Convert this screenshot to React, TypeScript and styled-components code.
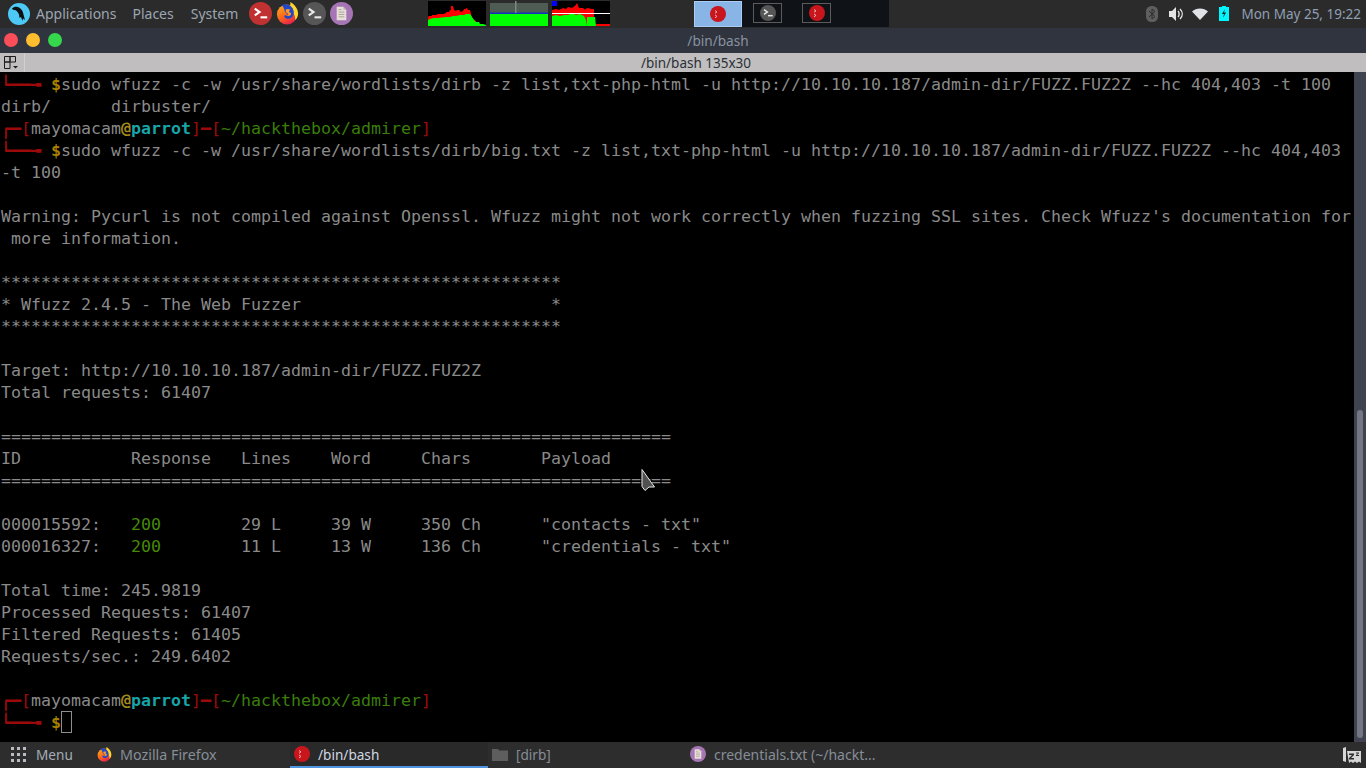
import React from "react";
import styled, { createGlobalStyle } from "styled-components";

const GlobalStyle = createGlobalStyle`
    html, body {
        margin: 0;
        padding: 0;
        background: #000000;
    }
    #root {
        width: 1366px;
        height: 768px;
        overflow: hidden;
    }
`;

const Screen = styled.div`
    position: relative;
    width: 1366px;
    height: 768px;
    display: flex;
    flex-direction: column;
    background: #000000;
    font-family: "Noto Sans", sans-serif;
`;

const TopPanel = styled.header`
    height: 28px;
    flex: none;
    display: flex;
    align-items: flex-start;
    background: #2b2b2b;
`;

const MenuGroup = styled.nav`
    display: flex;
    align-items: center;
    height: 27px;
    padding-left: 8px;
`;

const MenuItem = styled.span<{ $gap: number }>`
    margin-left: ${(p) => p.$gap}px;
    font-size: 14px;
    color: #9ba6b2;
`;

const Launchers = styled.div`
    display: flex;
    align-items: center;
    gap: 4px;
    height: 27px;
    margin-left: 11px;
`;

const Monitors = styled.div`
    display: flex;
    gap: 4px;
    margin: 1px 0 0 75px;
`;

const Workspaces = styled.div`
    display: flex;
    height: 27px;
    margin-left: 84px;
    background: #0f1217;
`;

const WorkspaceCell = styled.div<{ $active?: boolean; $width: number }>`
    width: ${(p) => p.$width}px;
    height: 26px;
    display: flex;
    align-items: center;
    justify-content: ${(p) => (p.$active ? "center" : "flex-start")};
    box-sizing: border-box;
    padding-left: ${(p) => (p.$active ? 0 : 11)}px;
    margin-top: ${(p) => (p.$active ? 1 : 0)}px;
    background: ${(p) => (p.$active ? "#89b4e6" : "transparent")};
    border: ${(p) => (p.$active ? "1px solid #a9cdf5" : "none")};
`;

const MiniWindow = styled.div`
    width: 29px;
    height: 20px;
    display: flex;
    align-items: center;
    justify-content: center;
    border: 1px solid #5b5b5b;
    box-sizing: border-box;
`;

const Tray = styled.div`
    margin-left: auto;
    height: 27px;
    display: flex;
    align-items: center;
    padding-right: 5px;
`;

const TrayIcon = styled.span<{ $left: number }>`
    display: flex;
    margin-left: ${(p) => p.$left}px;
`;

const Clock = styled.span`
    margin-left: 12px;
    font-size: 13.5px;
    color: #8f9fb3;
`;

const TitleBar = styled.div`
    height: 25px;
    flex: none;
    display: flex;
    align-items: center;
    justify-content: center;
    position: relative;
    padding-left: 70px;
    background: #2f343f;
    font-size: 13.6px;
    color: #8a929f;
`;

const Lights = styled.div`
    position: absolute;
    left: 4px;
    top: 5px;
    display: flex;
    gap: 8px;
`;

const Light = styled.span<{ $color: string }>`
    width: 14px;
    height: 14px;
    border-radius: 50%;
    background: ${(p) => p.$color};
`;

const TabBar = styled.div`
    height: 19px;
    flex: none;
    display: flex;
    align-items: center;
    background: #c0bebe;
    font-size: 13.5px;
    color: #2a3038;
`;

const TabTool = styled.div`
    width: 25px;
    height: 19px;
    flex: none;
    display: flex;
    align-items: center;
    justify-content: center;
    border-right: 1px solid #d2d0d0;
    box-sizing: border-box;
`;

const TabTitle = styled.span`
    flex: 1;
    text-align: center;
    padding-left: 1px;
`;

const TerminalArea = styled.main`
    flex: 1;
    display: flex;
    min-height: 0;
`;

const Terminal = styled.div`
    flex: 1;
    padding: 1px 0 0 1px;
    overflow: hidden;
    font-family: "DejaVu Sans Mono", monospace;
    font-size: 16.61px;
    color: #8a8a8a;
`;

const Line = styled.div`
    height: 22px;
    line-height: 24px;
    white-space: pre;
`;

const Frame = styled.span`
    color: #9c0a0a;
`;

const FrameHeavy = styled(Frame)`
    font-weight: 700;
    text-shadow: 0 1px 0 #9c0a0a;
`;

const Dollar = styled.span`
    color: #a98000;
    font-weight: 700;
`;

const At = styled.span`
    color: #a58a1c;
    font-weight: 700;
`;

const Host = styled.span`
    color: #18a5a8;
    font-weight: 700;
`;

const PathText = styled.span`
    color: #3a7d0a;
`;

const Ok = styled.span`
    color: #468a08;
`;

const Caret = styled.span`
    display: inline-block;
    width: 11px;
    height: 22px;
    box-sizing: border-box;
    border: 1px solid #8e8e8e;
    vertical-align: top;
`;

const ScrollTrack = styled.div`
    width: 12px;
    flex: none;
    display: flex;
    justify-content: center;
    align-items: flex-end;
    background: #3f4350;
`;

const ScrollThumb = styled.div`
    width: 6px;
    height: 328px;
    margin-bottom: 4px;
    border-radius: 3px;
    background: #747783;
`;

const Pointer = styled.svg`
    position: absolute;
    left: 641px;
    top: 468px;
`;

const BottomPanel = styled.footer`
    height: 26px;
    flex: none;
    display: flex;
    align-items: stretch;
    background: #2d2d2d;
    font-size: 13.6px;
`;

const StartButton = styled.div`
    width: 93px;
    display: flex;
    align-items: center;
    gap: 10px;
    padding: 0 0 2px 11px;
    box-sizing: border-box;
    color: #a3adb8;
`;

const Task = styled.div<{ $width: number; $active?: boolean; $font?: number }>`
    width: ${(p) => p.$width}px;
    box-sizing: border-box;
    display: flex;
    align-items: center;
    gap: 8px;
    padding-left: 4px;
    font-size: ${(p) => p.$font ?? 13.6}px;
    color: ${(p) => (p.$active ? "#d0d8e2" : "#868e98")};
    background: ${(p) => (p.$active ? "#292929" : "transparent")};
    border-bottom: 2px solid ${(p) => (p.$active ? "#4f94e0" : "transparent")};
`;

const SleepSlot = styled.div`
    margin-left: auto;
    padding: 5px 5px 0 0;
`;

const RedTerm = ({ size = 18 }: { size?: number }) => (
    <svg width={size} height={size} viewBox="0 0 24 24">
        <circle cx="12" cy="12" r="12" fill="#c03232" />
        <path d="M6 7l5 3.5L6 14" fill="none" stroke="#fff" strokeWidth="2.2" />
        <path d="M12 16h7" stroke="#fff" strokeWidth="2.2" />
    </svg>
);

const RedDot = ({ size = 16 }: { size?: number }) => (
    <svg width={size} height={size} viewBox="0 0 16 16">
        <circle cx="8" cy="8" r="8" fill="#c8161c" />
        <path d="M5 4.500l2 1.400-2 1.400M5 9l2 1.400-2 1.400" fill="none" stroke="#f3c0c0" strokeWidth="0.9" />
    </svg>
);

const GrayTerm = ({ size = 22 }: { size?: number }) => (
    <svg width={size} height={size} viewBox="0 0 24 24">
        <circle cx="12" cy="12" r="12" fill="#565656" />
        <path d="M6 7l5 3.5L6 14" fill="none" stroke="#e8e8e8" strokeWidth="2.2" />
        <path d="M12 16h7" stroke="#e8e8e8" strokeWidth="2.2" />
    </svg>
);

const Firefox = ({ size = 23 }: { size?: number }) => (
    <svg width={size} height={size} viewBox="0 0 24 24">
        <defs>
            <linearGradient id="fx" x1="0.1" y1="0" x2="0.6" y2="1">
                <stop offset="0" stopColor="#ffb020" />
                <stop offset="0.55" stopColor="#ff6a1a" />
                <stop offset="1" stopColor="#e5224c" />
            </linearGradient>
        </defs>
        <circle cx="11.500" cy="13" r="10.500" fill="url(#fx)" />
        <path d="M15 0c4 2.500 8 6.500 8 12 0 3-1 5-3 7 .5-3-.5-6-3-8-1.500-2-2.500-6-2-11z" fill="#ffd52b" />
        <path d="M6 3c3-1 7-1 10 2 2 2 3 5 2.500 8-1 3-4 5-7 4.500-3-1-3.500-3-2-4 1 1 3 1 3.500 0-2-1-3.500-3-4-4 0-2.500-1.500-4.500-3-6.500z" fill="#2247c8" />
        <path d="M10 8c1.500-1 3.500-1 5 0-1 .5-1.500 1.500-1.500 2.500 1.500 0 2.500 1 2 3-1 1-2.500 1.500-4 1 1-.5 1.500-1.500 1-2.500-1.500 0-2.500-2-2.500-4z" fill="#ff9a1f" />
    </svg>
);

const Editor = ({ size = 23 }: { size?: number }) => (
    <svg width={size} height={size} viewBox="0 0 24 24">
        <circle cx="12" cy="12" r="12" fill="#a675b5" />
        <path d="M7 5h7l3 3v11H7z" fill="#e8e0d8" />
        <path d="M14 5v3h3" fill="#bdb5ad" />
        <path d="M9 8h3M9 10.500h6M9 13h6M9 15.500h6" stroke="#a9a29a" strokeWidth="1" />
    </svg>
);

const ParrotLogo = () => (
    <svg width="22" height="22" viewBox="0 0 22 22">
        <circle cx="11" cy="11" r="11" fill="#4cc9f5" />
        <path d="M4 5.500C6 3.500 9 3.500 11 4.500c2.500 1.200 4 4 4.500 7l1.500 5.500-2-1.500-.5 2.500-1.500-4-1.500 1-.5-3.500C10 9 8 7 6.500 7 5.500 7 4.500 6.500 4 5.500z" fill="#0c1014" />
    </svg>
);

const Graph = ({ bg, children }: { bg: string; children: React.ReactNode }) => (
    <svg width="58" height="25" viewBox="0 0 58 25" style={{ background: bg }}>
        {children}
    </svg>
);

const CpuGraph = () => (
    <Graph bg="#000000">
        <path d="M0 25V16l1-1 3 0 0-1 4 0 2-1 6 0 3-2 2 0 1-2 1 0 0-4 2 0 1 4 2 1 1-1 2 0 2 2 2-1 1-2 1 0 2-1 1 2 2 0 1 4 1 3 1 2 3 2 1 3 1-1 2 3 2 0 4 1 0-1z" fill="#ff0000" />
        <path d="M0 25V19l2-1 4-1 4 0 8-1 4 0 3-1 3 0 4-1 4 0 2-1 4 0 2 3 2 3 2 2 3 0 1 2 3 0 6 2z" fill="#00ff00" />
    </Graph>
);

const MemGraph = () => (
    <Graph bg="#4e5c54">
        <rect x="0" y="0" width="58" height="2" fill="#2b2b2b" />
        <rect x="0" y="12.500" width="58" height="12.500" fill="#00ff00" />
        <rect x="0" y="11.500" width="58" height="1.500" fill="#1030c0" />
        <rect x="25" y="0" width="1.500" height="12" fill="#7a8a80" />
    </Graph>
);

const NetGraph = () => (
    <Graph bg="#000000">
        <rect x="0" y="0" width="5" height="5" fill="#0000ff" />
        <path d="M0 25V9l4-1 3 1 4-2 3 1 2-2 4 1 3-2 2-3 2 5 4 0 1 1 1 1V8l3-1 3 1 3 0V15l-1 10z" fill="#ff0000" />
        <path d="M0 25V15l4-1 4 1 4-1 4 0 4-2 4 2 4-1 4 2 2 4 1 6h0V16h8l1 9z" fill="#00ff00" />
        <path d="M44 25v-2h14v2z" fill="#ff0000" />
        <rect x="0" y="12" width="58" height="1" fill="#ffffff" />
    </Graph>
);

const Bluetooth = () => (
    <svg width="12" height="16" viewBox="0 0 12 16">
        <rect width="12" height="16" rx="5.500" fill="#5f5f5f" />
        <path d="M3 5l6 5.500-3 2.500V3l3 2.500L3 11" fill="none" stroke="#2b2b2b" strokeWidth="1" />
    </svg>
);

const Volume = () => (
    <svg width="15" height="14" viewBox="0 0 15 14">
        <path d="M0 4h3l4-4v14l-4-4H0z" fill="#e4e4e4" />
        <path d="M9 4c1.500 1.500 1.500 4.500 0 6M11 2c3 3 3 7 0 10" fill="none" stroke="#e4e4e4" strokeWidth="1.400" />
    </svg>
);

const Wifi = () => (
    <svg width="16" height="12" viewBox="0 0 16 12">
        <path d="M0 3.500C4-.5 12-.5 16 3.500L8 12z" fill="#dfe3e8" />
    </svg>
);

const Battery = () => (
    <svg width="10" height="15" viewBox="0 0 10 15">
        <path d="M3 0h4v1h3v14H0V1h3z" fill="#00f5ff" />
        <path d="M6 3L3 8h2l-1 4 3-5.500H5z" fill="#202020" />
    </svg>
);

const LayoutGlyph = () => (
    <svg width="16" height="14" viewBox="0 0 16 14">
        <path d="M.5.500h5.500v5.500H.5zM6 .500h5.500v5.500H6zM.5 6h5.500v6.500H.5z" fill="none" stroke="#1c1c1c" strokeWidth="1" />
        <path d="M9 10h5l-2.500 2.500z" fill="#1c1c1c" />
    </svg>
);

const MenuDots = () => (
    <svg width="15" height="15" viewBox="0 0 15 15" fill="#b8bcc0">
        {[0, 1, 2].map((r) =>
            [0, 1, 2].map((c) => <rect key={`${r}${c}`} x={c * 6} y={r * 6} width="3" height="3" />)
        )}
    </svg>
);

const Folder = () => (
    <svg width="16" height="13" viewBox="0 0 16 13">
        <path d="M0 1h6l1 1.500h9V13H0z" fill="#5e5e5e" />
    </svg>
);

const Sleep = () => (
    <svg width="18" height="17" viewBox="0 0 18 17">
        <path d="M0 1l3-1v15L0 14zM4 4h14v12l-2-1.500-2 1.500-2-1.500-2 1.500-2-1.500-2 1.500z" fill="#d6d6d6" />
        <path d="M6 6.500h5v1.500l-3 3h3v1.500H6V11l3-3H6z" fill="#2c2c2c" />
        <path d="M13 5.500h3v.8l-2 1.700h2v1h-3v-.9l2-1.600h-2z" fill="#2c2c2c" />
    </svg>
);

const rule = "=".repeat(67);
const stars = "*".repeat(56);

const Prompt = () => (
    <Line>
        <FrameHeavy>┌─</FrameHeavy><Frame>[</Frame>mayomacam<At>@</At><Host>parrot</Host><Frame>]</Frame><FrameHeavy>─</FrameHeavy><Frame>[</Frame><PathText>~/hackthebox/admirer</PathText><Frame>]</Frame>
    </Line>
);

const Command = ({ text }: { text: string }) => (
    <Line>
        <FrameHeavy>└──╼ </FrameHeavy><Dollar>$</Dollar>{text}
    </Line>
);

const ResultRow = ({ id, lines, words, chars, payload }: { id: string; lines: string; words: string; chars: string; payload: string }) => (
    <Line>
        {id}:   <Ok>200</Ok>{`        ${lines}     ${words}     ${chars}      ${payload}`}
    </Line>
);

export default function App() {
    return (
        <Screen>
            <GlobalStyle />
            <TopPanel>
                <MenuGroup>
                    <ParrotLogo />
                    <MenuItem $gap={6}>Applications</MenuItem>
                    <MenuItem $gap={16}>Places</MenuItem>
                    <MenuItem $gap={17}>System</MenuItem>
                    <Launchers>
                        <RedTerm size={23} />
                        <Firefox />
                        <GrayTerm size={23} />
                        <Editor />
                    </Launchers>
                </MenuGroup>
                <Monitors>
                    <CpuGraph />
                    <MemGraph />
                    <NetGraph />
                </Monitors>
                <Workspaces>
                    <WorkspaceCell $active $width={48}><RedDot /></WorkspaceCell>
                    <WorkspaceCell $width={49}><MiniWindow><GrayTerm size={16} /></MiniWindow></WorkspaceCell>
                    <WorkspaceCell $width={49}><MiniWindow><RedDot /></MiniWindow></WorkspaceCell>
                    <WorkspaceCell $width={49} />
                </Workspaces>
                <Tray>
                    <TrayIcon $left={0}><Bluetooth /></TrayIcon>
                    <TrayIcon $left={11}><Volume /></TrayIcon>
                    <TrayIcon $left={8}><Wifi /></TrayIcon>
                    <TrayIcon $left={11}><Battery /></TrayIcon>
                    <Clock>Mon May 25, 19:22</Clock>
                </Tray>
            </TopPanel>
            <TitleBar>
                <Lights>
                    <Light $color="#fc4e59" />
                    <Light $color="#fdbd2f" />
                    <Light $color="#35d84c" />
                </Lights>
                /bin/bash
            </TitleBar>
            <TabBar>
                <TabTool><LayoutGlyph /></TabTool>
                <TabTitle>/bin/bash 135x30</TabTitle>
            </TabBar>
            <TerminalArea>
                <Terminal>
                    <Command text="sudo wfuzz -c -w /usr/share/wordlists/dirb -z list,txt-php-html -u http://10.10.10.187/admin-dir/FUZZ.FUZ2Z --hc 404,403 -t 100" />
                    <Line>dirb/      dirbuster/</Line>
                    <Prompt />
                    <Command text="sudo wfuzz -c -w /usr/share/wordlists/dirb/big.txt -z list,txt-php-html -u http://10.10.10.187/admin-dir/FUZZ.FUZ2Z --hc 404,403" />
                    <Line>-t 100</Line>
                    <Line />
                    <Line>Warning: Pycurl is not compiled against Openssl. Wfuzz might not work correctly when fuzzing SSL sites. Check Wfuzz's documentation for</Line>
                    <Line> more information.</Line>
                    <Line />
                    <Line>{stars}</Line>
                    <Line>{"* Wfuzz 2.4.5 - The Web Fuzzer                         *"}</Line>
                    <Line>{stars}</Line>
                    <Line />
                    <Line>Target: http://10.10.10.187/admin-dir/FUZZ.FUZ2Z</Line>
                    <Line>Total requests: 61407</Line>
                    <Line />
                    <Line>{rule}</Line>
                    <Line>{"ID           Response   Lines    Word     Chars       Payload"}</Line>
                    <Line>{rule}</Line>
                    <Line />
                    <ResultRow id="000015592" lines="29 L" words="39 W" chars="350 Ch" payload={'"contacts - txt"'} />
                    <ResultRow id="000016327" lines="11 L" words="13 W" chars="136 Ch" payload={'"credentials - txt"'} />
                    <Line />
                    <Line>Total time: 245.9819</Line>
                    <Line>Processed Requests: 61407</Line>
                    <Line>Filtered Requests: 61405</Line>
                    <Line>Requests/sec.: 249.6402</Line>
                    <Line />
                    <Prompt />
                    <Line>
                        <FrameHeavy>└──╼ </FrameHeavy><Dollar>$</Dollar><Caret />
                    </Line>
                </Terminal>
                <ScrollTrack><ScrollThumb /></ScrollTrack>
            </TerminalArea>
            <BottomPanel>
                <StartButton><MenuDots />Menu</StartButton>
                <Task $width={197} $font={14.3}><Firefox size={15} />Mozilla Firefox</Task>
                <Task $width={198} $active><RedDot />/bin/bash</Task>
                <Task $width={198}><Folder />[dirb]</Task>
                <Task $width={198} $font={14}><Editor size={16} />credentials.txt (~/hackt...</Task>
                <SleepSlot><Sleep /></SleepSlot>
            </BottomPanel>
            <Pointer width="15" height="24" viewBox="0 0 15 24">
                <path d="M1 1.500v17l3 4 4-3.500h5.500z" fill="#505050" stroke="#e8e8e8" strokeWidth="1" />
            </Pointer>
        </Screen>
    );
}
